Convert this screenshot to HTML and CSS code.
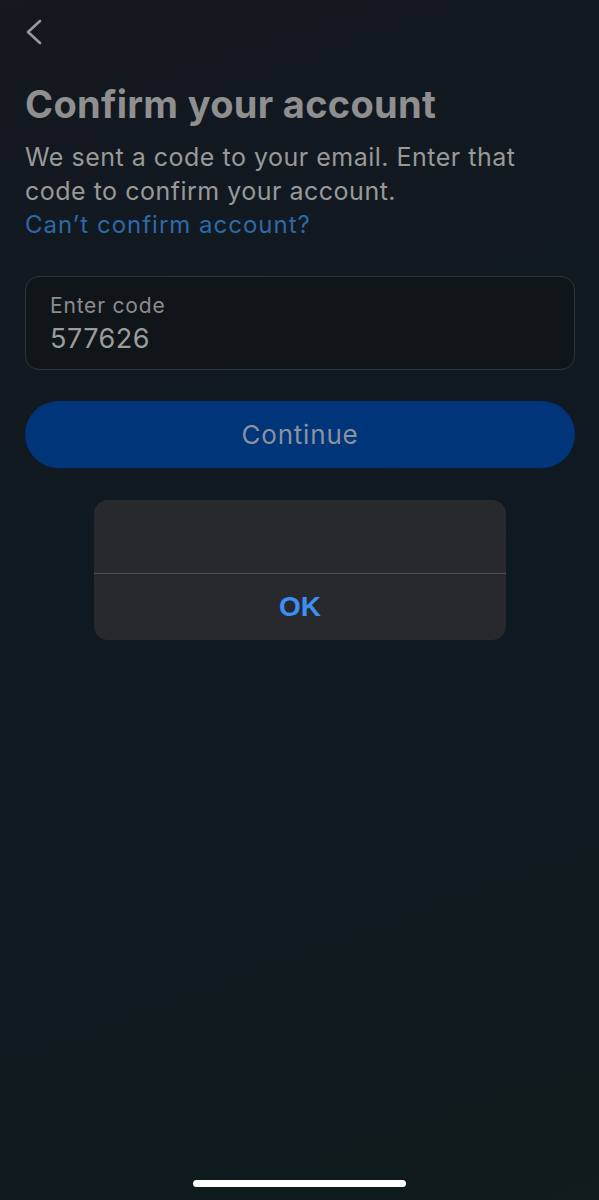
FILE: index.html
```html
<!DOCTYPE html>
<html>
<head>
  <link rel="stylesheet" href="styles.css">
</head>
<body>
  <div class="screen">
    <div class="topbar">
      <svg class="back" width="24" height="28" viewBox="0 0 24 28">
        <polyline points="18,3 6,14 18,25" fill="none" stroke="#9a9a9a" stroke-width="2.6" stroke-linecap="round" stroke-linejoin="round"/>
      </svg>
    </div>

    <div class="content">
      <h1 class="title">Confirm your account</h1>
      <p class="desc">We sent a code to your email. Enter that code to confirm your account.</p>
      <a class="link">Can’t confirm account?</a>

      <div class="field">
        <div class="field-label">Enter code</div>
        <div class="field-value">577626</div>
      </div>

      <button class="continue">Continue</button>

      <div class="alert">
        <div class="alert-body"></div>
        <div class="alert-ok">OK</div>
      </div>
    </div>

    <div class="home-bar"></div>
  </div>
</body>
</html>
```

FILE: styles.css
```css
html, body {
  margin: 0;
  padding: 0;
}

body {
  font-family: Inter, "Noto Sans", sans-serif;
  background: linear-gradient(160deg, #14181f 0%, #0f1922 55%, #0f1b1c 100%);
  color: #9a9a9a;
}

.screen {
  display: flex;
  flex-direction: column;
  min-height: 1200px;
  box-sizing: border-box;
}

.topbar {
  padding: 18px 0 0 22px;
  height: 44px;
  box-sizing: border-box;
}

.back {
  display: block;
}

.content {
  padding: 0 24px 0 25px;
}

.title {
  margin: 36px 0 0;
  font-size: 38px;
  font-weight: 700;
  line-height: 48px;
  color: #8f8f8f;
  letter-spacing: 0.3px;
}

.desc {
  margin: 12px 0 0;
  font-size: 25px;
  line-height: 34px;
  color: #999999;
  letter-spacing: 0.5px;
}

.link {
  display: block;
  font-size: 24px;
  line-height: 34px;
  color: #2b6aa6;
  letter-spacing: 1px;
}

.field {
  margin-top: 34px;
  height: 94px;
  box-sizing: border-box;
  border: 1px solid #2e3338;
  border-radius: 14px;
  background: #0f1519;
  padding: 15px 24px 0;
}

.field-label {
  font-size: 21px;
  line-height: 28px;
  color: #8c8c8c;
  letter-spacing: 0.8px;
}

.field-value {
  margin-top: 2px;
  font-size: 27px;
  line-height: 34px;
  color: #9c9c9c;
  letter-spacing: 0.5px;
}

.continue {
  display: block;
  width: 100%;
  margin-top: 31px;
  height: 67px;
  border: none;
  border-radius: 34px;
  background: #00357a;
  font-family: inherit;
  font-size: 26px;
  letter-spacing: 0.8px;
  color: #8b929c;
}

.alert {
  margin: 32px 69px 0 69px;
  background: #28292c;
  border-radius: 14px;
  overflow: hidden;
}

.alert-body {
  height: 73px;
  border-bottom: 1px solid #4e5054;
}

.alert-ok {
  height: 66px;
  display: flex;
  align-items: center;
  justify-content: center;
  font-family: "Liberation Sans", Arial, sans-serif;
  font-weight: 700;
  font-size: 28px;
  color: #3d8ef5;
}

.home-bar {
  margin: auto auto 13px;
  width: 213px;
  height: 7px;
  border-radius: 4px;
  background: #ffffff;
}
```
